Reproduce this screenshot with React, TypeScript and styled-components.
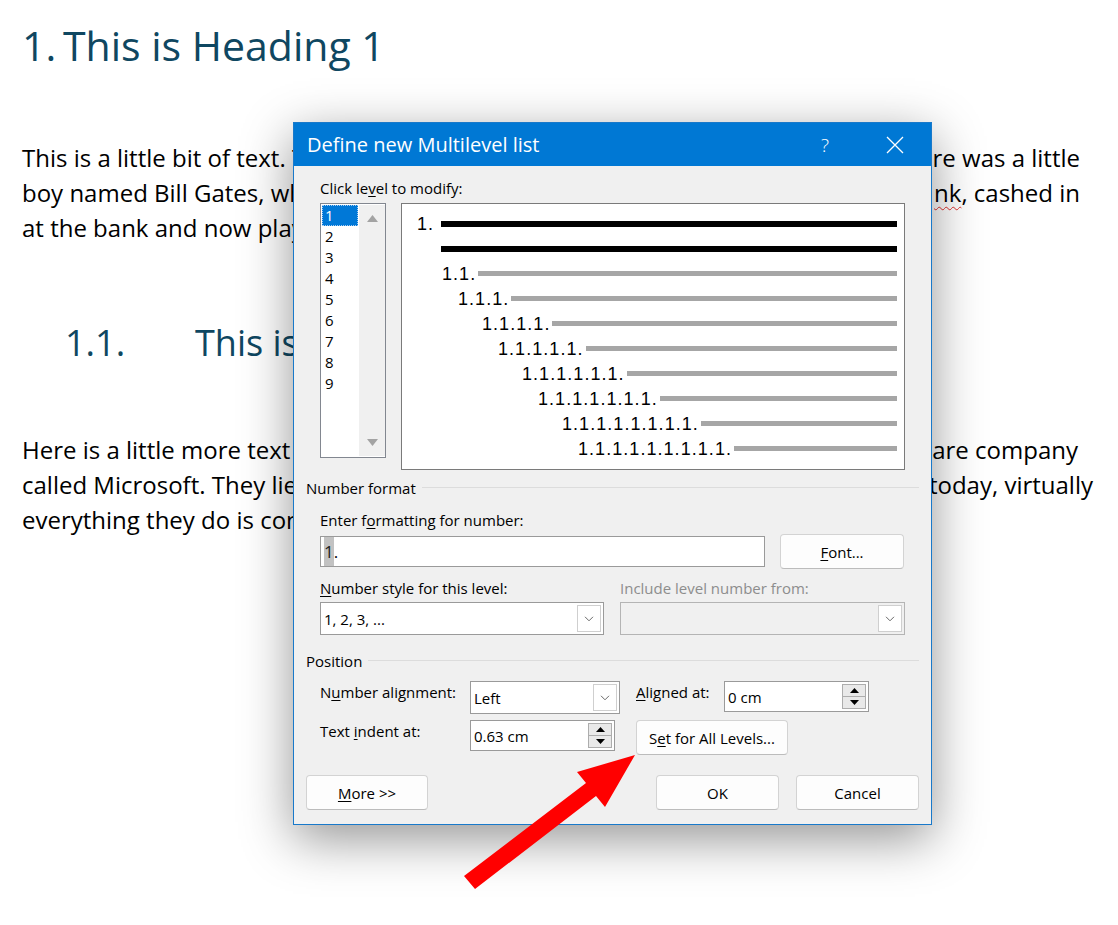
import React from "react";
import styled, { createGlobalStyle, css } from "styled-components";

const GlobalStyle = createGlobalStyle`
  html, body {
    margin: 0;
    padding: 0;
    background: #fff;
  }
  body {
    font-family: "Open Sans", "Noto Sans", sans-serif;
  }
`;

const docFont = `"Open Sans", "Noto Sans", sans-serif`;
const uiFont = `"Open Sans", "Noto Sans", sans-serif`;

/* ---------- document behind the dialog ---------- */

const Page = styled.div`
  position: relative;
  width: 1118px;
  height: 925px;
  overflow: hidden;
  box-sizing: border-box;
  padding: 17px 0 0 22px;
  background: #fff;
  font-family: ${docFont};
`;

const Heading1 = styled.h1`
  margin: 0;
  display: flex;
  font-size: 41px;
  font-weight: 400;
  line-height: 56px;
  color: #0f4761;
`;

const Heading2 = styled.h2`
  margin: 74px 0 0;
  padding-left: 43px;
  display: flex;
  font-size: 36px;
  font-weight: 400;
  line-height: 48px;
  color: #0f4761;
`;

const HeadingNumber = styled.span<{ $w: number }>`
  width: ${p => p.$w}px;
  flex-shrink: 0;
`;

const Paragraph = styled.div<{ $top: number }>`
  margin-top: ${p => p.$top}px;
  font-size: 24px;
  line-height: 35px;
  color: #000;
`;

// one visual line of the page; the part between the spans sits under the dialog
const Line = styled.div<{ $end?: number }>`
  display: flex;
  justify-content: space-between;
  white-space: pre;
  ${p => p.$end && css`width: ${p.$end - 22}px;`}
`;

const Typo = styled.span`
  text-decoration: underline wavy #e0302c;
  text-decoration-thickness: 1px;
  text-underline-offset: 4px;
`;

/* ---------- dialog ---------- */

const Dialog = styled.div`
  position: absolute;
  left: 293px;
  top: 122px;
  width: 639px;
  box-sizing: border-box;
  border: 1px solid #1979ca;
  background: #f0f0f0;
  box-shadow: 0 14px 48px rgba(0, 0, 0, 0.42);
  font-family: ${uiFont};
  font-size: 15px;
  color: #000;
`;

const TitleBar = styled.div`
  height: 43px;
  display: flex;
  align-items: center;
  padding-left: 13px;
  background: #0078d4;
  color: #fff;
  font-size: 20px;
`;

const Title = styled.span`
  flex: 1;
`;

const TitleButton = styled.div`
  width: 46px;
  height: 43px;
  display: flex;
  align-items: center;
  justify-content: center;
  font-size: 19px;
  font-weight: 300;
  & + & {
    margin-left: 24px;
    margin-right: 13px;
  }
`;

const Body = styled.div`
  display: flex;
  flex-direction: column;
  padding: 12px 12px 14px 12px;
`;

const Label = styled.div<{ $top?: number; $disabled?: boolean }>`
  padding-left: 14px;
  margin-top: ${p => p.$top ?? 0}px;
  line-height: 20px;
  color: ${p => (p.$disabled ? "#8d8d8d" : "#000")};
  white-space: nowrap;
`;

const Key = styled.span`
  text-decoration: underline;
  text-underline-offset: 2px;
`;

const TopRow = styled.div`
  display: flex;
  gap: 15px;
  margin-top: 5px;
  padding: 0 14px;
`;

const LevelList = styled.div`
  width: 66px;
  height: 255px;
  box-sizing: border-box;
  display: flex;
  gap: 1px;
  padding: 1px 0 1px 1px;
  border: 1px solid #828790;
  background: #fff;
`;

const LevelItems = styled.div`
  width: 36px;
  display: flex;
  flex-direction: column;
`;

const LevelItem = styled.div<{ $selected?: boolean }>`
  height: 21px;
  line-height: 21px;
  padding-left: 3px;
  ${p =>
    p.$selected &&
    css`
      background: #0078d7;
      color: #fff;
      outline: 1px dotted #a8cdf2;
      outline-offset: -1px;
    `}
`;

const ScrollTrack = styled.div`
  flex: 1;
  display: flex;
  flex-direction: column;
  align-items: center;
  justify-content: space-between;
  padding: 10px 0;
  background: #f0f0f0;
`;

const Preview = styled.div`
  flex: 1;
  height: 267px;
  box-sizing: border-box;
  padding: 7px 7px 0 0;
  border: 1px solid #7a7a7a;
  background: #fff;
`;

const PreviewRow = styled.div<{ $indent: number }>`
  height: 25px;
  display: flex;
  align-items: center;
  padding-left: ${p => p.$indent}px;
`;

const PreviewNumber = styled.span<{ $min?: number }>`
  min-width: ${p => p.$min ?? 0}px;
  font-family: "Liberation Sans", Arial, sans-serif;
  font-size: 18px;
  letter-spacing: 1.05px;
  line-height: 20px;
`;

const Bar = styled.div<{ $strong?: boolean }>`
  flex: 1;
  height: ${p => (p.$strong ? 6 : 5)}px;
  margin-left: ${p => (p.$strong ? 0 : 2)}px;
  background: ${p => (p.$strong ? "#000" : "#a6a6a6")};
`;

const GroupHeader = styled.div<{ $top: number }>`
  display: flex;
  align-items: center;
  gap: 6px;
  margin-top: ${p => p.$top}px;
  line-height: 20px;
  &::after {
    content: "";
    flex: 1;
    height: 1px;
    margin-top: -2px;
    background: #dcdcdc;
  }
`;

const FormatRow = styled.div`
  display: flex;
  align-items: center;
  gap: 15px;
  margin-top: 4px;
  padding-left: 14px;
`;

const TextBox = styled.div<{ $w: number; $h?: number; $disabled?: boolean }>`
  width: ${p => p.$w}px;
  height: ${p => p.$h ?? 31}px;
  box-sizing: border-box;
  display: flex;
  align-items: center;
  padding: 0 2px 0 3px;
  border: 1px solid ${p => (p.$disabled ? "#b4b4b4" : "#9a9a9a")};
  background: ${p => (p.$disabled ? "#f0f0f0" : "#fff")};
  white-space: nowrap;
`;

const FormatText = styled.span`
  font-size: 17px;
`;

const Selected = styled.span`
  background: #c2c2c2;
  color: #222;
  padding: 3px 0;
`;

const BoxText = styled.span`
  flex: 1;
`;

const DropButton = styled.div`
  width: 24px;
  height: calc(100% - 4px);
  box-sizing: border-box;
  display: flex;
  align-items: center;
  justify-content: center;
  border: 1px solid #cfcfcf;
  background: #fff;
`;

const Spinner = styled.div`
  width: 24px;
  height: calc(100% - 4px);
  box-sizing: border-box;
  display: flex;
  flex-direction: column;
  border: 1px solid #adadad;
`;

const SpinHalf = styled.div`
  flex: 1;
  display: flex;
  align-items: center;
  justify-content: center;
  background: #e9e9e9;
  & + & {
    border-top: 1px solid #adadad;
  }
`;

const StyleGrid = styled.div`
  display: grid;
  grid-template-columns: 284px 285px;
  column-gap: 16px;
  row-gap: 4px;
  margin-top: 9px;
  padding-left: 14px;
  ${Label} {
    padding-left: 0;
  }
`;

const PositionGrid = styled.div`
  display: grid;
  grid-template-columns: 150px 166px 88px 145px;
  grid-template-rows: 33px 35px;
  row-gap: 6px;
  margin-top: 10px;
  padding-left: 14px;
  ${Label} {
    padding: 1px 0 0;
  }
`;

const Button = styled.button<{ $w: number }>`
  width: ${p => p.$w}px;
  height: 35px;
  padding: 0;
  border: 1px solid #d3d3d3;
  border-bottom-color: #bcbcbc;
  border-radius: 4px;
  background: #fdfdfd;
  font-family: ${uiFont};
  font-size: 15px;
  color: #000;
`;

const WideButton = styled(Button)`
  grid-column: 3 / span 2;
  justify-self: start;
`;

const ButtonRow = styled.div`
  display: flex;
  gap: 17px;
  margin-top: 20px;
  ${Button}:nth-child(2) {
    margin-left: auto;
  }
`;

const ArrowMark = styled.svg`
  position: absolute;
  left: 455px;
  top: 745px;
`;

/* ---------- small drawings ---------- */

const Chevron = () => (
  <svg width="10" height="6" viewBox="0 0 10 6">
    <path d="M1 0.8 L5 4.8 L9 0.8" fill="none" stroke="#6a6a6a" strokeWidth="1" />
  </svg>
);

const SpinBox = ({ w, value }: { w: number; value: string }) => (
  <TextBox $w={w}>
    <BoxText>{value}</BoxText>
    <Spinner>
      <SpinHalf>
        <svg width="9" height="5" viewBox="0 0 9 5">
          <path d="M0 5 L4.5 0 L9 5Z" fill="#000" />
        </svg>
      </SpinHalf>
      <SpinHalf>
        <svg width="9" height="5" viewBox="0 0 9 5">
          <path d="M0 0 L9 0 L4.5 5Z" fill="#000" />
        </svg>
      </SpinHalf>
    </Spinner>
  </TextBox>
);

const Select = ({ w, value, disabled }: { w: number; value?: string; disabled?: boolean }) => (
  <TextBox $w={w} $h={33} $disabled={disabled}>
    <BoxText>{value}</BoxText>
    <DropButton>
      <Chevron />
    </DropButton>
  </TextBox>
);

const previewRows = [
  { indent: 15, num: "1.", strong: true },
  { indent: 39, num: "", strong: true },
  { indent: 40, num: "1.1." },
  { indent: 56, num: "1.1.1." },
  { indent: 80, num: "1.1.1.1." },
  { indent: 96, num: "1.1.1.1.1." },
  { indent: 120, num: "1.1.1.1.1.1." },
  { indent: 136, num: "1.1.1.1.1.1.1." },
  { indent: 160, num: "1.1.1.1.1.1.1.1." },
  { indent: 176, num: "1.1.1.1.1.1.1.1.1." },
];

const levels = ["1", "2", "3", "4", "5", "6", "7", "8", "9"];

export default function App() {
  return (
    <Page>
      <GlobalStyle />

      <Heading1>
        <HeadingNumber $w={41}>1.</HeadingNumber>
        This is Heading 1
      </Heading1>

      <Paragraph $top={67}>
        <Line $end={1080}>
          <span>This is a little bit of text. T</span>
          <span>re was a little</span>
        </Line>
        <Line $end={1080}>
          <span>boy named Bill Gates, wh</span>
          <span>
            <Typo>nk</Typo>, cashed in
          </span>
        </Line>
        <Line>at the bank and now play</Line>
      </Paragraph>

      <Heading2>
        <HeadingNumber $w={130}>1.1.</HeadingNumber>
        This is
      </Heading2>

      <Paragraph $top={65}>
        <Line $end={1078}>
          <span>Here is a little more text</span>
          <span>are company</span>
        </Line>
        <Line $end={1093}>
          <span>called Microsoft. They lie</span>
          <span>today, virtually</span>
        </Line>
        <Line>everything they do is con</Line>
      </Paragraph>

      <Dialog>
        <TitleBar>
          <Title>Define new Multilevel list</Title>
          <TitleButton>?</TitleButton>
          <TitleButton>
            <svg width="18" height="18" viewBox="0 0 18 18">
              <path d="M1 1 L17 17 M17 1 L1 17" stroke="#fff" strokeWidth="1.3" />
            </svg>
          </TitleButton>
        </TitleBar>

        <Body>
          <Label>
            Click le<Key>v</Key>el to modify:
          </Label>
          <TopRow>
            <LevelList>
              <LevelItems>
                {levels.map(l => (
                  <LevelItem key={l} $selected={l === "1"}>
                    {l}
                  </LevelItem>
                ))}
              </LevelItems>
              <ScrollTrack>
                <svg width="11" height="7" viewBox="0 0 11 7">
                  <path d="M0 7 L5.5 0 L11 7Z" fill="#a3a3a3" />
                </svg>
                <svg width="11" height="7" viewBox="0 0 11 7">
                  <path d="M0 0 L11 0 L5.5 7Z" fill="#a3a3a3" />
                </svg>
              </ScrollTrack>
            </LevelList>
            <Preview>
              {previewRows.map((r, i) => (
                <PreviewRow key={i} $indent={r.indent}>
                  {r.num && <PreviewNumber $min={r.strong ? 24 : 0}>{r.num}</PreviewNumber>}
                  <Bar $strong={r.strong} />
                </PreviewRow>
              ))}
            </Preview>
          </TopRow>

          <GroupHeader $top={8}>Number format</GroupHeader>
          <Label $top={12}>
            Enter f<Key>o</Key>rmatting for number:
          </Label>
          <FormatRow>
            <TextBox $w={445}>
              <FormatText>
                <Selected>1</Selected>.
              </FormatText>
            </TextBox>
            <Button $w={124}>
              <Key>F</Key>ont...
            </Button>
          </FormatRow>

          <StyleGrid>
            <Label>
              <Key>N</Key>umber style for this level:
            </Label>
            <Label $disabled>Include level number from:</Label>
            <Select w={284} value="1, 2, 3, ..." />
            <Select w={285} disabled />
          </StyleGrid>

          <GroupHeader $top={16}>Position</GroupHeader>
          <PositionGrid>
            <Label>
              N<Key>u</Key>mber alignment:
            </Label>
            <Select w={150} value="Left" />
            <Label>
              <Key>A</Key>ligned at:
            </Label>
            <SpinBox w={145} value="0 cm" />

            <Label>
              Text <Key>i</Key>ndent at:
            </Label>
            <SpinBox w={145} value="0.63 cm" />
            <WideButton $w={152}>
              S<Key>e</Key>t for All Levels...
            </WideButton>
          </PositionGrid>

          <ButtonRow>
            <Button $w={122}>
              <Key>M</Key>ore &gt;&gt;
            </Button>
            <Button $w={123}>OK</Button>
            <Button $w={123}>Cancel</Button>
          </ButtonRow>
        </Body>
      </Dialog>

      <ArrowMark width="190" height="150" viewBox="0 0 190 150">
        <polygon points="9,131 131,38 122,27 180,10 150,62 141,51 20,144" fill="#ff0000" />
      </ArrowMark>
    </Page>
  );
}
